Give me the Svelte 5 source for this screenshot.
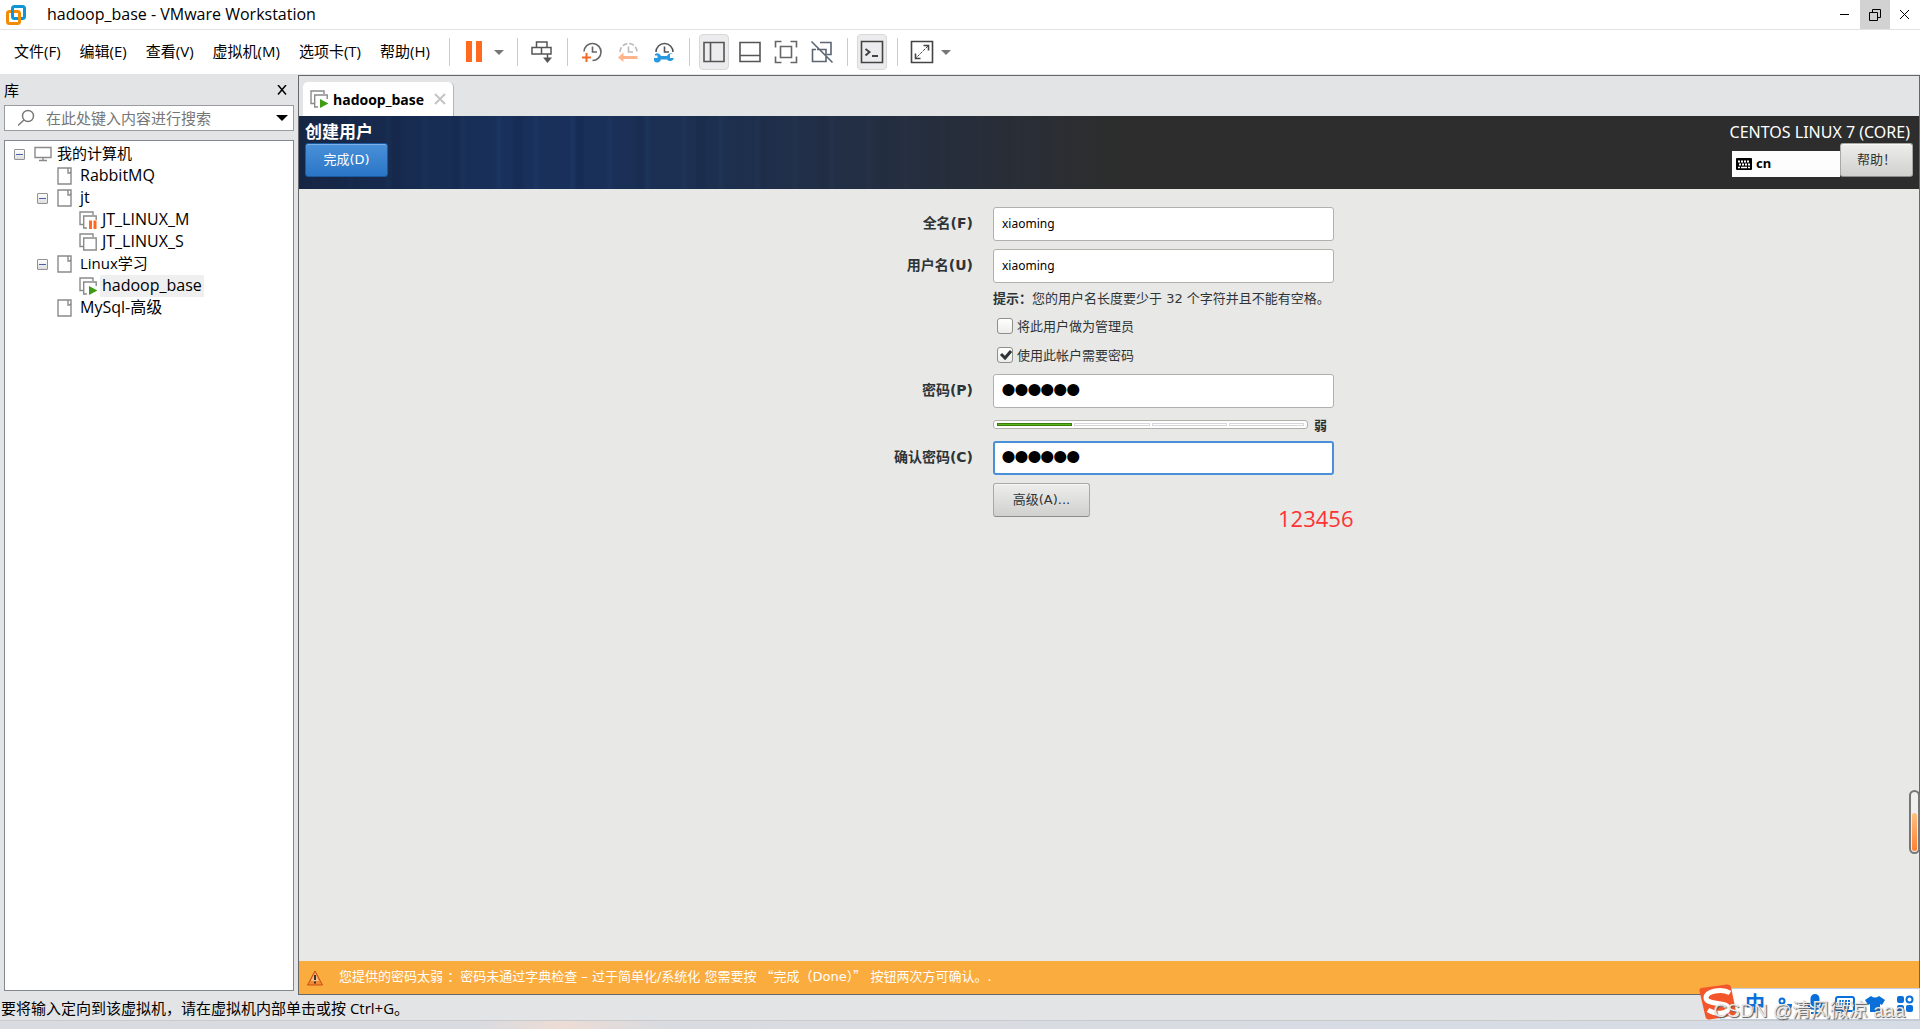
<script lang="ts">
	const menus = ['文件(F)', '编辑(E)', '查看(V)', '虚拟机(M)', '选项卡(T)', '帮助(H)'];

	const tree = [
		{ name: '我的计算机', level: 0, icon: 'computer', open: true, small: true },
		{ name: 'RabbitMQ', level: 1, icon: 'folder' },
		{ name: 'jt', level: 1, icon: 'folder', open: true },
		{ name: 'JT_LINUX_M', level: 2, icon: 'paused' },
		{ name: 'JT_LINUX_S', level: 2, icon: 'vm' },
		{ name: 'Linux学习', level: 1, icon: 'folder', open: true, small: true },
		{ name: 'hadoop_base', level: 2, icon: 'running', selected: true },
		{ name: 'MySql-高级', level: 1, icon: 'folder' }
	];

	let search = $state('');
	let fullName = $state('xiaoming');
	let userName = $state('xiaoming');
	let admin = $state(false);
	let needPassword = $state(true);
	let password = $state('123456');
	let confirm = $state('123456');
	let layout = $state('cn');
	const strength = 1;
</script>

{#snippet vmIcon(kind)}
	<svg width="18" height="18" viewBox="0 0 18 18" fill="none" stroke="#8a8a8a" stroke-width="1.4">
		{#if kind === 'computer'}
			<path d="M1 2.5h16v10H1zM9 12.5v3M5 15.5h8" />
		{:else if kind === 'folder'}
			<path d="M1 1h13v16H1z" />
			<path d="M11 1v5h2l1-1.5" />
		{:else}
			<path d="M4 13.5H1V1h13v3" />
			{#if kind === 'vm'}
				<path d="M4.7 5h12.5v12H4.7z" />
			{:else}
				<path d="M8 17H4.7V5h12.5v4" />
			{/if}
			{#if kind === 'paused'}
				<path d="M11.5 9.5V18M16 9.5V18" stroke="#ff6a1f" stroke-width="3" />
			{:else if kind === 'running'}
				<path d="M10 9l8.5 4.5L10 18z" fill="#3f9b14" stroke="none" />
			{/if}
		{/if}
	</svg>
{/snippet}

<div class="window">
	<header class="titlebar">
		<svg width="20" height="20" viewBox="0 0 20 20" fill="none" stroke-width="3">
			<rect x="6.5" y="1.5" width="12" height="12" rx="2" stroke="#0f95d3" />
			<rect x="1.5" y="6.5" width="12" height="12" rx="2" stroke="#f38b00" />
			<path d="M6.5 5v6" stroke="#0f95d3" />
		</svg>
		<h1>hadoop_base - VMware Workstation</h1>
		<div class="window-buttons">
			<button aria-label="最小化">
				<svg width="12" height="12" viewBox="0 0 12 12"><path d="M1 5.5h9" stroke="#000" /></svg>
			</button>
			<button class="restore" aria-label="还原">
				<svg width="12" height="12" viewBox="0 0 12 12" fill="none" stroke="#000"><path d="M.5 3.5h8v8h-8zM3.5 3V.5h8v8H9" /></svg>
			</button>
			<button aria-label="关闭">
				<svg width="12" height="12" viewBox="0 0 12 12"><path d="M1 1l9 9M10 1l-9 9" stroke="#000" /></svg>
			</button>
		</div>
	</header>

	<nav class="toolbar">
		{#each menus as menu}
			<button class="menu">{menu}</button>
		{/each}
		<span class="sep"></span>
		<button class="tool pause" aria-label="挂起">
			<svg width="16" height="22" viewBox="0 0 16 22"><path d="M0 0h6v21H0zM10 0h6v21h-6z" fill="#ff6a1f" /></svg>
		</button>
		<button class="caret" aria-label="电源选项"></button>
		<span class="sep"></span>
		<button class="tool" aria-label="发送 Ctrl+Alt+Del">
			<svg width="24" height="24" viewBox="0 0 24 24" fill="none" stroke="#555" stroke-width="1.5">
				<path d="M6.5 2H17v5.5H6.5zM2 7.5h9.5V14H2zM11.5 7.5H21V14h-9.5zM17.5 14v6" />
				<path d="M13 17.5h9L17.5 23z" fill="#555" stroke="none" />
			</svg>
		</button>
		<span class="sep"></span>
		<button class="tool" aria-label="拍摄快照">
			<svg width="24" height="24" viewBox="0 0 24 24" fill="none" stroke-width="1.6">
				<path d="M4 11.5A8.5 8.5 0 1 1 12.5 20.5M12.5 6.5V12H17" stroke="#666" />
				<path d="M6.5 13v9M2 17.5h9" stroke="#f0692a" stroke-width="2" />
			</svg>
		</button>
		<button class="tool" aria-label="恢复快照">
			<svg width="24" height="24" viewBox="0 0 24 24" fill="none" stroke-width="1.6">
				<path d="M4 12A8.5 8.5 0 0 1 21 12" stroke="#bbb" stroke-dasharray="5 2" />
				<path d="M12.5 6.5V12H17" stroke="#bbb" />
				<path d="M2 17.5l5.5-5v3.5h14v3h-14v3z" fill="#ffb48c" />
			</svg>
		</button>
		<button class="tool" aria-label="管理快照">
			<svg width="24" height="24" viewBox="0 0 24 24" fill="none" stroke-width="1.6">
				<path d="M4 12A8.5 8.5 0 0 1 21 12M12.5 6.5V12H17" stroke="#555" />
				<path d="M3 14a4 4 0 0 1 6 2h6a4 4 0 0 1 6-2h-3v4h4a4 4 0 0 1-7 1.5H9a4 4 0 0 1-7 1.5v-3h3.5v-2.5H3z" fill="#2a9ae0" />
			</svg>
		</button>
		<span class="sep"></span>
		<button class="tool active" aria-label="显示或隐藏库">
			<svg width="24" height="24" viewBox="0 0 24 24" fill="none" stroke="#555" stroke-width="1.6"><path d="M2 2.5h20v19H2zM8.5 2.5v19" /></svg>
		</button>
		<button class="tool" aria-label="显示或隐藏缩略图栏">
			<svg width="24" height="24" viewBox="0 0 24 24" fill="none" stroke="#555" stroke-width="1.6"><path d="M2 2.5h20v19H2zM2 15.5h20" /></svg>
		</button>
		<button class="tool" aria-label="全屏">
			<svg width="24" height="24" viewBox="0 0 24 24" fill="none" stroke="#666" stroke-width="1.6"><path d="M1.5 7.5v-6h6M16.5 1.5h6v6M22.5 16.5v6h-6M7.5 22.5h-6v-6M6.5 6.5h11v11h-11z" /></svg>
		</button>
		<button class="tool" aria-label="Unity">
			<svg width="24" height="24" viewBox="0 0 24 24" fill="none" stroke="#5b6673" stroke-width="1.6"><path d="M10 2.5h11v12h-4M7 9.5h9v12H2.5v-12H6M1.5 1.5l21 21" /></svg>
		</button>
		<span class="sep"></span>
		<button class="tool active" aria-label="控制台视图">
			<svg width="24" height="24" viewBox="0 0 24 24" fill="none" stroke="#444" stroke-width="1.6"><path d="M1.5 1.5h21v21h-21z" /><path d="M5.5 9l4 3-4 3.5M12 16h6" stroke-width="2" /></svg>
		</button>
		<span class="sep"></span>
		<button class="tool" aria-label="自动拉伸">
			<svg width="24" height="24" viewBox="0 0 24 24" fill="none" stroke="#444" stroke-width="1.6">
				<path d="M1.5 1.5h21v21h-21zM13.5 5.5h5v5M5.5 13.5v5h5" />
				<path d="M18 6L6 18" stroke-width="1" stroke-dasharray="3 1" />
			</svg>
		</button>
		<button class="caret" aria-label="拉伸选项"></button>
	</nav>

	<main>
		<aside>
			<div class="side-head">
				<h2>库</h2>
				<button aria-label="关闭库">
					<svg width="10" height="10" viewBox="0 0 10 10"><path d="M1 0l8 9.5M9 0L1 9.5" stroke="#000" stroke-width="1.5" /></svg>
				</button>
			</div>
			<div class="search">
				<svg width="18" height="18" viewBox="0 0 18 18" fill="none" stroke="#777" stroke-width="1.4"><circle cx="10" cy="7" r="5.5" /><path d="M6 11l-6 5.5" /></svg>
				<input type="text" aria-label="搜索" placeholder="在此处键入内容进行搜索" bind:value={search} />
				<button class="caret" aria-label="搜索范围"></button>
			</div>
			<ul class="tree">
				{#each tree as node}
					<li class="level-{node.level}">
						{#if node.open}
							<button class="toggle" aria-label="折叠"></button>
						{:else}
							<span class="no-toggle"></span>
						{/if}
						{@render vmIcon(node.icon)}
						<span class="name" class:small={node.small} class:selected={node.selected}>{node.name}</span>
					</li>
				{/each}
			</ul>
		</aside>

		<section class="console">
			<div class="tabs">
				<div class="tab">
					{@render vmIcon('running')}
					<span>hadoop_base</span>
					<button aria-label="关闭选项卡">
						<svg width="12" height="12" viewBox="0 0 12 12"><path d="M1 1l10 10M11 1L1 11" stroke="#c4c4c4" stroke-width="2" /></svg>
					</button>
				</div>
			</div>

			<div class="guest">
				<div class="banner">
					<div class="banner-left">
						<h2>创建用户</h2>
						<button class="done">完成(D)</button>
					</div>
					<div class="banner-right">
						<span class="product">CENTOS LINUX 7 (CORE)</span>
						<div class="banner-tools">
							<label class="keyboard">
								<svg width="16" height="12" viewBox="0 0 16 12">
									<rect width="16" height="12" rx="1" fill="#000" />
									<path d="M2 3.5h12M3 6.5h11" stroke="#fff" stroke-width="2" stroke-dasharray="2 1" />
									<path d="M2 9.5h2M5 9.5h6M12 9.5h2" stroke="#fff" stroke-width="1.5" />
								</svg>
								<input type="text" aria-label="键盘布局" readonly value={layout} />
							</label>
							<button class="gtk help">帮助！</button>
						</div>
					</div>
				</div>

				<form onsubmit={(e) => e.preventDefault()}>
					<label class="field-label" for="fullname">全名(F)</label>
					<input class="entry" id="fullname" type="text" bind:value={fullName} />

					<label class="field-label" for="username">用户名(U)</label>
					<input class="entry" id="username" type="text" bind:value={userName} />

					<p class="hint"><b>提示：</b>您的用户名长度要少于 32 个字符并且不能有空格。</p>
					<label class="check"><input type="checkbox" bind:checked={admin} />将此用户做为管理员</label>
					<label class="check"><input type="checkbox" bind:checked={needPassword} />使用此帐户需要密码</label>

					<label class="field-label" for="password">密码(P)</label>
					<input class="entry" id="password" type="password" bind:value={password} />

					<div class="strength">
						<div class="bar">
							{#each [0, 1, 2, 3] as i}
								<span class:filled={i < strength}></span>
							{/each}
						</div>
						<b>弱</b>
					</div>

					<label class="field-label" for="confirm">确认密码(C)</label>
					<input class="entry focused" id="confirm" type="password" bind:value={confirm} />

					<div class="actions">
						<button type="button" class="gtk advanced">高级(A)...</button>
						<span class="note">123456</span>
					</div>
				</form>

				<div class="warning">
					<svg width="18" height="16" viewBox="0 0 18 16">
						<path d="M9 1l7.5 14h-15z" fill="#f08a35" stroke="#c9510c" stroke-linejoin="round" />
						<path d="M9 3l4 8H5z" fill="#f9c08c" />
						<path d="M9 5v5M9 11.5v2" stroke="#333" stroke-width="2" />
					</svg>
					<p>您提供的密码太弱 ：密码未通过字典检查 – 过于简单化/系统化 您需要按 <i>“</i>完成（Done）<i>”</i> 按钮两次方可确认。.</p>
				</div>
			</div>
		</section>
	</main>

	<footer>要将输入定向到该虚拟机，请在虚拟机内部单击或按 Ctrl+G。</footer>
	<div class="desktop"></div>

	<div class="gauge"><span></span></div>

	<div class="ime">
		<svg class="sogou" width="40" height="38" viewBox="0 0 40 38">
			<path d="M3 5Q1 6 1.5 8l6 26q1 3 4 2.5l24-4q3-1 2.5-4L33 4q-1-3-4-2.500z" fill="#f2562a" />
			<path d="M32 10C24 5 8 8 8 15s22 4 22 10-12 7-20 2" fill="none" stroke="#fff" stroke-width="5" />
		</svg>
		<span class="zh">中</span>
		<svg width="20" height="20" viewBox="0 0 20 20" fill="#0a6fd8"><circle cx="7" cy="7" r="2.5" fill="none" stroke="#0a6fd8" stroke-width="2" /><path d="M12 10h5q0 6-5 7l2-4h-2z" /></svg>
		<svg width="20" height="20" viewBox="0 0 20 20" fill="none" stroke="#0a6fd8" stroke-width="2"><rect x="6.5" y="1" width="7" height="11" rx="3.5" fill="#0a6fd8" /><path d="M3 9q0 6 7 6t7-6M10 15v4M6 19h8" /></svg>
		<svg width="20" height="20" viewBox="0 0 20 20" fill="none" stroke="#0a6fd8" stroke-width="2"><rect x="1" y="3" width="18" height="14" rx="2" /><path d="M4 7h12M4 10h12" stroke-dasharray="2 1" /><path d="M6 14h8" /></svg>
		<svg width="20" height="20" viewBox="0 0 20 20" fill="#0a6fd8"><path d="M6 2q4 3 8 0l6 4-3 5-2-1v8H5v-8l-2 1-3-5z" /></svg>
		<svg width="20" height="20" viewBox="0 0 20 20" fill="#0a6fd8"><rect x="11.5" y="2.5" width="6" height="6" rx="3" fill="none" stroke="#0a6fd8" stroke-width="2" /><rect x="2" y="2" width="7" height="7" rx="2" /><rect x="2" y="11" width="7" height="7" rx="2" /><rect x="11" y="11" width="7" height="7" rx="2" /></svg>
		<span class="watermark">CSDN @清风微凉 aaa</span>
	</div>
</div>

<style>
	:global(body) {
		margin: 0;
	}

	.window {
		position: relative;
		display: flex;
		flex-direction: column;
		height: 100vh;
		overflow: hidden;
		background: #e3e4e6;
		color: #000;
		font-family: 'Open Sans', 'Noto Sans CJK SC', sans-serif;
		font-size: 15px;
	}

	button,
	input {
		box-sizing: border-box;
		margin: 0;
		padding: 0;
		border: 0;
		background: none;
		color: inherit;
		font: inherit;
		outline: 0;
	}

	svg {
		display: block;
		flex: none;
	}

	h1,
	h2,
	p,
	ul {
		margin: 0;
		padding: 0;
		font-size: inherit;
		font-weight: normal;
		list-style: none;
	}

	.titlebar {
		display: flex;
		align-items: center;
		height: 29px;
		flex: none;
		padding-left: 6px;
		border-bottom: 1px solid #e3e3e3;
		background: #fff;
	}

	.titlebar h1 {
		flex: 1;
		margin-left: 21px;
		font-size: 16px;
		line-height: 27px;
	}

	.window-buttons {
		display: flex;
		height: 100%;
	}

	.window-buttons button {
		display: flex;
		align-items: center;
		justify-content: center;
		width: 30px;
		height: 29px;
	}

	.window-buttons .restore {
		background: #d2d2d2;
	}

	.toolbar {
		display: flex;
		align-items: center;
		height: 44px;
		flex: none;
		padding-left: 14px;
		background: #fff;
	}

	.menu {
		margin-right: 19px;
		padding-bottom: 3px;
		line-height: 22px;
		white-space: nowrap;
	}

	.sep {
		width: 1px;
		height: 28px;
		margin: 0 9px 0 4px;
		background: #ccc;
	}

	.menu + .sep {
		margin: 0 16px 0 0;
	}

	.tool {
		display: flex;
		align-items: center;
		justify-content: center;
		box-sizing: border-box;
		width: 30px;
		height: 36px;
		margin-right: 6px;
		border: 1px solid transparent;
		border-radius: 4px;
	}

	.tool.pause {
		width: 16px;
		margin-right: 14px;
	}

	.tool.active {
		border-color: #d8d8d8;
		background: #ececee;
	}

	.caret {
		width: 0;
		height: 0;
		border: 5px solid transparent;
		border-top-color: #777;
		border-bottom: 0;
	}

	.tool + .caret {
		margin-left: -2px;
	}

	.caret + .sep {
		margin-left: 13px;
	}

	main {
		display: flex;
		flex: 1;
		min-height: 0;
	}

	aside {
		display: flex;
		flex-direction: column;
		width: 290px;
		padding: 0 4px 4px;
	}

	.side-head {
		display: flex;
		align-items: center;
		justify-content: space-between;
		height: 31px;
		padding-right: 7px;
	}

	.search {
		display: flex;
		align-items: center;
		height: 24px;
		padding: 0 5px 0 13px;
		border: 1px solid #999ba0;
		background: #fff;
	}

	.search input {
		flex: 1;
		min-width: 0;
		margin-left: 10px;
		height: 24px;
	}

	.search input::placeholder {
		color: #767676;
		opacity: 1;
	}

	.search .caret {
		border-width: 6px;
		border-bottom: 0;
		border-top-color: #000;
	}

	.tree {
		flex: 1;
		margin-top: 9px;
		padding-top: 2px;
		border: 1px solid #828790;
		background: #fff;
	}

	.tree li {
		display: flex;
		align-items: center;
		height: 22px;
		padding-left: 9px;
	}

	.tree .level-1 {
		padding-left: 32px;
	}

	.tree .level-2 {
		padding-left: 54px;
	}

	.toggle,
	.no-toggle {
		width: 11px;
		height: 11px;
		margin-right: 9px;
	}

	.toggle {
		border: 1px solid #919191;
		border-radius: 1px;
		background: linear-gradient(#4b63a7, #4b63a7) center / 7px 1px no-repeat, linear-gradient(#fff, #ddd);
	}

	.name {
		margin-left: 3px;
		padding: 0 2px 2px;
		font-size: 16px;
		line-height: 20px;
	}

	.name.small {
		font-size: 15px;
	}

	.name.selected {
		background: #efefef;
	}

	.console {
		display: flex;
		flex: 1;
		flex-direction: column;
		min-width: 0;
		margin-top: 1px;
		border: 1px solid #66686c;
	}

	.tabs {
		display: flex;
		align-items: flex-end;
		height: 40px;
	}

	.tab {
		display: flex;
		align-items: center;
		height: 34px;
		margin-left: 4px;
		padding: 0 7px;
		border-right: 1px solid #b5b5b5;
		border-radius: 5px 5px 0 0;
		background: #fff;
		font-size: 14px;
		font-weight: bold;
	}

	.tab span {
		margin: 0 10px 0 5px;
	}

	.guest {
		display: flex;
		flex: 1;
		flex-direction: column;
		background: #e8e8e6;
		color: #2e3436;
		font-family: 'DejaVu Sans', 'Noto Sans CJK SC', sans-serif;
		font-size: 13px;
	}

	.banner {
		display: flex;
		justify-content: space-between;
		box-sizing: border-box;
		height: 73px;
		padding: 5px 6px 0;
		background:
			linear-gradient(90deg, rgba(21, 35, 63, 0.8) 0, transparent 200px 280px, rgba(45, 45, 45, 0.35) 480px, #2d2d2d 820px),
			repeating-linear-gradient(90deg, transparent 0 11px, rgba(60, 110, 170, 0.08) 14px 16px, transparent 19px 37px),
			repeating-linear-gradient(90deg, transparent 0 29px, rgba(10, 20, 50, 0.12) 34px 39px, transparent 43px 61px),
			#18305a;
		color: #fff;
	}

	.banner h2 {
		font-size: 17px;
		font-weight: bold;
		line-height: 22px;
	}

	.done {
		width: 83px;
		height: 34px;
		padding-bottom: 3px;
		border: 1px solid #1c5a9f;
		border-radius: 3px;
		background: linear-gradient(#4a90d9, #2a76c6);
		box-shadow: inset 0 1px #7db1e8;
	}

	.product {
		display: block;
		padding-right: 3px;
		font-family: 'Noto Sans', sans-serif;
		font-size: 16px;
		line-height: 22px;
		text-align: right;
	}

	.banner-tools {
		display: flex;
		align-items: flex-end;
		justify-content: flex-end;
	}

	.keyboard {
		display: flex;
		align-items: center;
		width: 104px;
		height: 26px;
		padding-left: 4px;
		background: #fdfdfd;
		color: #000;
	}

	.keyboard input {
		width: 60px;
		margin-left: 4px;
		padding-bottom: 2px;
		font-family: 'Noto Sans', sans-serif;
		font-weight: bold;
	}

	.gtk {
		flex: none;
		height: 34px;
		padding-bottom: 3px;
		border: 1px solid #a8a8a4;
		border-bottom-color: #8c8c88;
		border-radius: 3px;
		background: linear-gradient(#ededeb, #d0d0ce);
		box-shadow: inset 0 1px #f8f8f6;
		color: #2e3436;
	}

	.help {
		width: 73px;
	}

	form {
		display: grid;
		flex: 1;
		grid-template-columns: 89px 341px;
		align-content: start;
		justify-content: center;
		column-gap: 20px;
		padding-top: 18px;
	}

	.field-label {
		grid-column: 1;
		align-self: start;
		font-size: 14px;
		font-weight: bold;
		line-height: 32px;
		text-align: right;
		white-space: nowrap;
	}

	.entry {
		grid-column: 2;
		height: 34px;
		margin-bottom: 8px;
		padding: 0 8px 2px;
		border: 1px solid #b0b0ac;
		border-radius: 3px;
		background: #fff;
		color: #000;
		font-family: 'Noto Sans', sans-serif;
		font-size: 12px;
	}

	/* large face so that the bullets fill the line */
	.entry[type='password'] {
		font-family: 'Liberation Sans', sans-serif;
		font-size: 37px;
		line-height: 32px;
		-webkit-text-stroke: 2px #000;
	}

	.entry.focused {
		border: 2px solid #4a90d9;
		padding: 0 7px 2px;
	}

	.hint,
	.check,
	.strength,
	.actions {
		grid-column: 2;
		white-space: nowrap;
	}

	.hint {
		line-height: 16px;
		margin-bottom: 4px;
	}

	.check {
		display: flex;
		align-items: center;
		height: 29px;
		padding-left: 4px;
	}

	.check input {
		appearance: none;
		width: 16px;
		height: 16px;
		margin-right: 4px;
		border: 1px solid #8f8f8b;
		border-radius: 3px;
		background: linear-gradient(#fff, #ececea);
	}

	.check input:checked {
		background: url("data:image/svg+xml,%3Csvg xmlns='http://www.w3.org/2000/svg' viewBox='0 0 14 14'%3E%3Cpath d='M3 6l4 4 6-7' fill='none' stroke='%232e3436' stroke-width='3'/%3E%3C/svg%3E") center / 14px 14px no-repeat, linear-gradient(#fff, #ececea);
	}

	.check + .field-label,
	.check + .field-label + .entry {
		margin-top: 5px;
	}

	.strength {
		display: flex;
		align-items: center;
		gap: 6px;
		height: 16px;
		margin-bottom: 9px;
	}

	.bar {
		display: flex;
		gap: 2px;
		box-sizing: border-box;
		width: 315px;
		height: 9px;
		padding: 2px 3px;
		border: 1px solid #b0b0ac;
		border-radius: 3px;
		background: #fff;
	}

	.bar span {
		flex: 1;
		border: 1px solid #d8d8dc;
	}

	.bar .filled {
		border-color: #3a7d08;
		background: #58b51a;
	}

	.actions {
		display: flex;
	}

	.advanced {
		width: 97px;
	}

	.note {
		margin-left: 188px;
		padding-top: 20px;
		color: #ff3333;
		font-family: 'Open Sans', sans-serif;
		font-size: 22px;
		line-height: 30px;
	}

	.warning {
		display: flex;
		align-items: center;
		height: 33px;
		padding-left: 7px;
		background: #fbac3e;
		color: #fff;
		white-space: nowrap;
	}

	.warning p {
		margin-left: 15px;
		padding-bottom: 2px;
		line-height: 20px;
	}

	/* full-width quotation marks */
	.warning i {
		font-family: 'Noto Sans CJK SC', sans-serif;
		font-style: normal;
	}

	footer {
		height: 25px;
		flex: none;
		padding-left: 1px;
		border-bottom: 1px solid #c8cacc;
		line-height: 26px;
	}

	.desktop {
		height: 8px;
		flex: none;
		background: linear-gradient(90deg, #dadbe0 480px, #eddcd5 560px, #dadbe0 660px, #d6dce6);
	}

	.gauge {
		position: absolute;
		top: 790px;
		right: 0;
		display: flex;
		align-items: flex-end;
		box-sizing: border-box;
		width: 11px;
		height: 64px;
		padding: 1px;
		border: 2px solid #777;
		border-radius: 6px;
		background: #f0f0ee;
	}

	.gauge span {
		flex: 1;
		height: 38px;
		border-radius: 3px;
		background: linear-gradient(#ffc080, #ff7f32);
	}

	.ime {
		position: absolute;
		right: 0;
		bottom: 9px;
		display: flex;
		align-items: center;
		gap: 10px;
		box-sizing: border-box;
		width: 200px;
		height: 32px;
		padding: 0 6px 0 24px;
		border: 1px solid #c3cfe0;
		background: #fff;
	}

	.sogou {
		position: absolute;
		left: -23px;
		top: -6px;
	}

	.zh {
		color: #0a6fd8;
		font-size: 20px;
		font-weight: bold;
		line-height: 30px;
	}

	.watermark {
		position: absolute;
		right: 14px;
		bottom: -5px;
		color: #e8e8e8;
		font-family: 'Liberation Sans', 'Noto Sans CJK SC', sans-serif;
		font-size: 19px;
		line-height: 26px;
		text-shadow: 1px 1px 1px #555;
		white-space: nowrap;
	}
</style>
